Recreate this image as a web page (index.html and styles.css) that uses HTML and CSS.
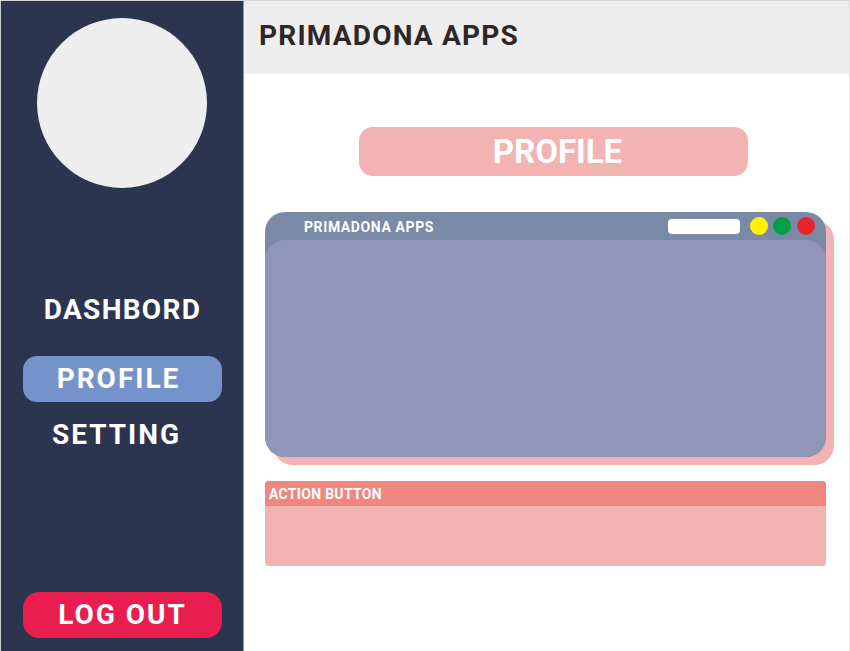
FILE: index.html
```html
<!DOCTYPE html>
<html>
<head>
<meta charset="utf-8">
<link rel="stylesheet" href="styles.css">
</head>
<body>
<div class="app">
  <aside class="sidebar">
    <div class="avatar"></div>
    <nav class="nav">
      <div class="nav-item nav-dash">DASHBORD</div>
      <div class="nav-item nav-active">PROFILE</div>
      <div class="nav-item">SETTING</div>
    </nav>
    <div class="logout">LOG OUT</div>
  </aside>
  <main class="main">
    <header class="topbar">PRIMADONA APPS</header>
    <section class="content">
      <div class="page-title">PROFILE</div>
      <div class="window">
        <div class="titlebar">
          <span class="win-title">PRIMADONA APPS</span>
          <span class="search"></span>
          <span class="dot dot-yellow"></span>
          <span class="dot dot-green"></span>
          <span class="dot dot-red"></span>
        </div>
        <div class="win-body"></div>
      </div>
      <div class="action-card">
        <div class="action-head">ACTION BUTTON</div>
        <div class="action-body"></div>
      </div>
    </section>
  </main>
</div>
</body>
</html>
```

FILE: styles.css
```css
* { box-sizing: border-box; margin: 0; padding: 0; }
html, body { width: 850px; height: 651px; background: #ffffff; overflow: hidden; }
body { font-family: Roboto, "Liberation Sans", sans-serif; font-weight: 700; }

.app {
  width: 850px;
  height: 651px;
  display: grid;
  grid-template-columns: 243px 1fr;
  border-left: 1px solid #c9cbd3;
  border-top: 1px solid #d6d6da;
  border-right: 1px solid #e2e2e4;
}

.sidebar {
  background: #2c3550;
  border-right: 1px solid #8b91a6;
  display: flex;
  flex-direction: column;
  align-items: center;
}

.avatar {
  width: 170px;
  height: 170px;
  border-radius: 50%;
  background: #eeeeee;
  margin-top: 17px;
  margin-left: 0;
}

.nav {
  margin-top: 97px;
  display: flex;
  flex-direction: column;
  align-items: center;
}

.nav-item {
  width: 199px;
  height: 46px;
  line-height: 46px;
  text-align: center;
  color: #ffffff;
  font-size: 28px;
  letter-spacing: 1.5px;
  border-radius: 14px;
  margin-left: 1px;
}
.nav-dash { margin-bottom: 25px; letter-spacing: 1.3px; padding-top: 2px; }
.nav-active { background: #7592cb; margin-bottom: 8px; letter-spacing: 2px; padding-right: 8px; }
.nav-item:last-child { padding-right: 12px; letter-spacing: 2px; padding-top: 2px; }

.logout {
  margin-top: auto;
  margin-bottom: 13px;
  width: 199px;
  height: 46px;
  line-height: 46px;
  margin-left: 1px;
  text-align: center;
  background: #e91e4e;
  color: #ffffff;
  font-size: 28px;
  letter-spacing: 2px;
  border-radius: 16px;
}

.main { display: flex; flex-direction: column; }

.topbar {
  height: 73px;
  background: #eeeeee;
  color: #2f2727;
  font-size: 28px;
  letter-spacing: 1.2px;
  display: flex;
  align-items: center;
  padding-left: 15px;
  padding-bottom: 4px;
}

.content {
  display: flex;
  flex-direction: column;
  padding-left: 21px;
}

.page-title {
  margin-top: 53px;
  margin-left: 94px;
  width: 389px;
  height: 49px;
  line-height: 49px;
  background: #f3b3b3;
  color: #ffffff;
  text-align: center;
  font-size: 33px;
  border-radius: 14px;
  padding-left: 8px;
}

.window {
  margin-top: 36px;
  width: 561px;
  height: 245px;
  background: #7a8aa6;
  border-radius: 20px;
  box-shadow: 8px 8px 0 #f3b3b3;
  display: flex;
  flex-direction: column;
  overflow: hidden;
}

.titlebar {
  height: 28px;
  display: flex;
  align-items: center;
  padding-left: 39px;
  padding-right: 11px;
  flex-shrink: 0;
}

.win-title {
  color: #ffffff;
  font-size: 14px;
  letter-spacing: 0.6px;
  margin-right: auto;
  padding-top: 1px;
}

.search {
  width: 72px;
  height: 15px;
  background: #ffffff;
  border-radius: 4px;
  margin-right: 10px;
}

.dot {
  width: 18px;
  height: 18px;
  border-radius: 50%;
  margin-left: 5px;
}
.dot-yellow { background: #fff200; margin-left: 0; }
.dot-green { background: #00a04a; }
.dot-red { background: #e8232b; margin-left: 6px; }

.win-body {
  flex: 1;
  background: #9294b8;
  border-radius: 20px;
}

.action-card {
  margin-top: 24px;
  width: 561px;
  height: 85px;
  border-radius: 4px;
  overflow: hidden;
  background: #f3b3b3;
  display: flex;
  flex-direction: column;
}

.action-head {
  height: 25px;
  background: #ef8780;
  color: #ffffff;
  font-size: 14px;
  letter-spacing: 0.3px;
  padding-left: 4px;
  display: flex;
  align-items: center;
}

.action-body { flex: 1; }
```
